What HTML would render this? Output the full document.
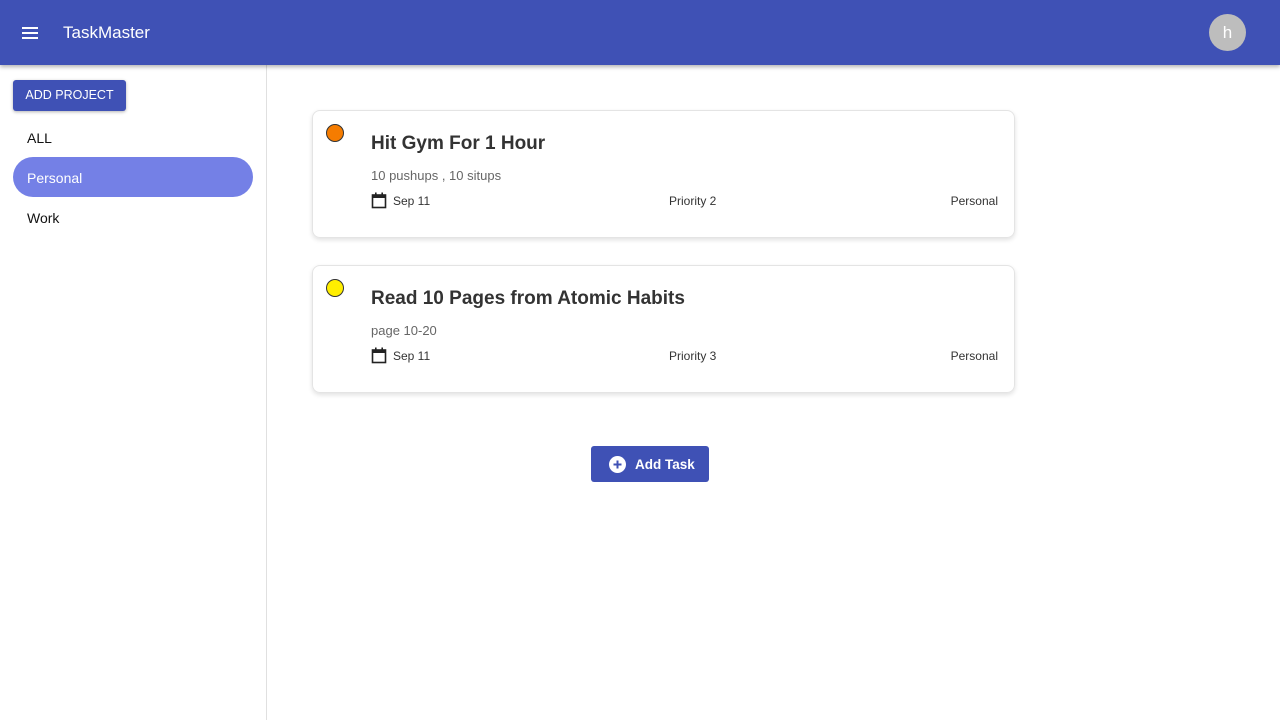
<!DOCTYPE html>
<html><head><style>
*{box-sizing:border-box;margin:0;padding:0}
body{width:1280px;height:720px;overflow:hidden;background:#fff;font-family:"Liberation Sans",sans-serif;position:relative}
.hdr{position:absolute;left:0;top:0;width:1280px;height:65px;background:#3f51b5;box-shadow:0 2px 4px rgba(0,0,0,.3);z-index:2}
.menu{position:absolute;left:22px;top:27px;width:16px}
.menu i{display:block;height:2px;background:#fff;margin-bottom:3px}
.title{position:absolute;left:63px;top:23px;color:#fff;font-size:17px}
.av{position:absolute;left:1209px;top:14px;width:37px;height:37px;border-radius:50%;background:#bdbdbd;color:#fff;font-size:17px;text-align:center;line-height:37px}
.side{position:absolute;left:0;top:65px;width:267px;height:655px;border-right:1px solid #e0e0e0}
.addp{position:absolute;left:13px;top:15px;width:113px;height:31px;background:#3f51b5;color:#fff;font-size:12.5px;border-radius:3px;text-align:center;line-height:31px;box-shadow:0 1px 3px rgba(0,0,0,.3)}
.it{position:absolute;left:27px;font-size:14px;color:#111}
.sel{position:absolute;left:13px;top:92px;width:240px;height:40px;border-radius:20px;background:#7480e6}
.card{position:absolute;left:312px;width:703px;height:128px;border:1px solid #e4e4e4;border-radius:8px;box-shadow:0 2px 5px rgba(0,0,0,.12);font-family:"Liberation Sans",sans-serif;color:#333}
.dot{position:absolute;left:13px;top:13px;width:18px;height:18px;border-radius:50%;border:1px solid #333}
.ct{position:absolute;left:58px;top:22px;font-size:19px;color:#333;font-weight:bold}
.cd{position:absolute;left:58px;top:57px;font-size:13px;color:#666}
.row{position:absolute;top:83px;font-size:12px;color:#333}
.btn{position:absolute;left:591px;top:446px;width:118px;height:36px;background:#3f51b5;border-radius:3px;color:#fff;font-weight:bold;font-size:13.5px}
</style></head><body>
<div class="hdr"><div class="menu"><i></i><i></i><i></i></div><div class="title">TaskMaster</div><div class="av">h</div></div>
<div class="side">
<div class="addp">ADD PROJECT</div>
<div class="it" style="top:65px">ALL</div>
<div class="sel"></div>
<div class="it" style="top:105px;color:#fff">Personal</div>
<div class="it" style="top:145px">Work</div>
</div>
<div class="card" style="top:110px">
<div class="dot" style="background:#f57c00"></div>
<div class="ct">Hit Gym For 1 Hour</div>
<div class="cd">10 pushups , 10 situps</div>
<svg style="position:absolute;left:58px;top:81px" width="16" height="17" viewBox="0 0 16 17"><rect x="1.5" y="3" width="13" height="12.5" fill="none" stroke="#222" stroke-width="1.6"/><rect x="1.5" y="3" width="13" height="3" fill="#222"/><rect x="4" y="0.5" width="1.6" height="3" fill="#222"/><rect x="10.4" y="0.5" width="1.6" height="3" fill="#222"/></svg>
<div class="row" style="left:80px">Sep 11</div><div class="row" style="left:356px">Priority 2</div><div class="row" style="right:16px">Personal</div>
</div>
<div class="card" style="top:265px">
<div class="dot" style="background:#ffee00"></div>
<div class="ct">Read 10 Pages from Atomic Habits</div>
<div class="cd">page 10-20</div>
<svg style="position:absolute;left:58px;top:81px" width="16" height="17" viewBox="0 0 16 17"><rect x="1.5" y="3" width="13" height="12.5" fill="none" stroke="#222" stroke-width="1.6"/><rect x="1.5" y="3" width="13" height="3" fill="#222"/><rect x="4" y="0.5" width="1.6" height="3" fill="#222"/><rect x="10.4" y="0.5" width="1.6" height="3" fill="#222"/></svg>
<div class="row" style="left:80px">Sep 11</div><div class="row" style="left:356px">Priority 3</div><div class="row" style="right:16px">Personal</div>
</div>
<div class="btn">
<svg style="position:absolute;left:18px;top:10px" width="17" height="17" viewBox="0 0 17 17"><circle cx="8.5" cy="8.5" r="8.5" fill="#fff"/><path d="M8.5 4.5v8M4.5 8.5h8" stroke="#3f51b5" stroke-width="2"/></svg>
<span style="position:absolute;left:44px;top:11px">Add Task</span>
</div>
</body></html>
